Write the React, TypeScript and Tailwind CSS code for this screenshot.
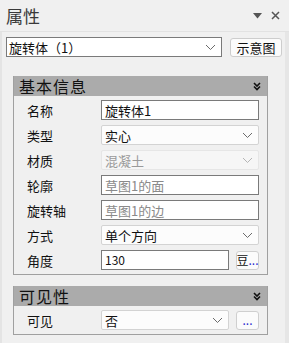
import React from "react";

const font = { fontFamily: '"Noto Sans CJK SC", "Noto Sans", sans-serif' };

function Chevron({ color = "#6b6b6b" }: { color?: string }) {
  return (
    <svg width="11" height="7" viewBox="0 0 11 7" className="shrink-0">
      <path d="M1 1 L5.5 5.5 L10 1" fill="none" stroke={color} strokeWidth="1" />
    </svg>
  );
}

function DoubleChevron() {
  return (
    <svg width="8" height="9" viewBox="0 0 8 9">
      <path d="M1 1 L4 4 L7 1 M1 4.5 L4 7.5 L7 4.5" fill="none" stroke="#111" strokeWidth="1.6" />
    </svg>
  );
}

function TextBox({ value, muted }: { value: string; muted?: boolean }) {
  return (
    <div
      className={`w-[158px] h-[20px] border border-[#7a7a7a] bg-white flex items-center pl-[3px] text-[13px] leading-none ${
        muted ? "text-[#8a8a8a]" : "text-[#111]"
      }`}
    >
      {value}
    </div>
  );
}

function SelectBox({ value, disabled, width = "w-[158px]" }: { value: string; disabled?: boolean; width?: string }) {
  return (
    <div
      className={`${width} h-[20px] border rounded-[2px] flex items-center justify-between pl-[3px] pr-[5px] text-[13px] leading-none ${
        disabled ? "border-[#e6e6e6] bg-[#f6f6f6] text-[#9a9a9a]" : "border-[#d3d3d3] bg-[#fcfcfc] text-[#111]"
      }`}
    >
      <span>{value}</span>
      <Chevron color={disabled ? "#b5b5b5" : "#6b6b6b"} />
    </div>
  );
}

function Row({ label, children }: { label: string; children: React.ReactNode }) {
  return (
    <div className="flex items-center h-[20px]">
      <div className="w-[87px] pl-[13px] text-[13px] text-[#111] leading-none">{label}</div>
      {children}
    </div>
  );
}

function SmallBtn({ children }: { children: React.ReactNode }) {
  return (
    <div className="ml-[7px] w-[23px] h-[19px] border border-[#cfcfcf] rounded-[3px] bg-[#fbfbfb] flex items-center justify-center text-[12px] leading-none text-[#111]">
      {children}
    </div>
  );
}

function Panel({ title, children }: { title: string; children: React.ReactNode }) {
  return (
    <div className="w-[255px] border border-t-0 border-[#a0a0a0]">
      <div className="h-[20px] bg-[#ababab] flex items-center justify-between pl-[5px] pr-[6px]">
        <span className="text-[16px] leading-none text-[#111] tracking-[1px]">{title}</span>
        <DoubleChevron />
      </div>
      <div className="flex flex-col gap-[5px] pt-[4px] pb-[4px]">{children}</div>
    </div>
  );
}

export default function App() {
  return (
    <div className="w-[289px] h-[343px] bg-[#f0f0f0] flex flex-col overflow-hidden" style={font}>
      <div className="h-[32px] flex items-center justify-between pl-[6px] pr-[9px] border-b border-[#e2e2e2] shrink-0">
        <span className="text-[17px] text-[#3a3a3a] leading-none">属性</span>
        <div className="flex items-center gap-[9px] text-[#555]">
          <svg width="9" height="6" viewBox="0 0 9 6">
            <path d="M0 0 L9 0 L4.5 5.5 Z" fill="#555" />
          </svg>
          <svg width="9" height="9" viewBox="0 0 9 9">
            <path d="M1 1 L8 8 M8 1 L1 8" stroke="#555" strokeWidth="1.5" />
          </svg>
        </div>
      </div>
      <div className="flex flex-1">
        <div className="w-[2px] bg-[#e4e4e4] shrink-0" />
        <div className="flex-1 flex flex-col pt-[5px]">
          <div className="flex items-center pl-[4px]">
            <div className="w-[216px] h-[20px] border border-[#7a7a7a] bg-white flex items-center justify-between pl-[2px] pr-[5px] text-[13px] leading-none text-[#111]">
              <span>旋转体（1）</span>
              <Chevron />
            </div>
            <div className="ml-[8px] w-[52px] h-[19px] border border-[#cdcdcd] rounded-[3px] bg-[#fbfbfb] flex items-center justify-center text-[13px] leading-none text-[#111]">
              示意图
            </div>
          </div>
          <div className="pl-[11px] pt-[19px] flex flex-col gap-[11px]">
            <Panel title="基本信息">
              <Row label="名称">
                <TextBox value="旋转体1" />
              </Row>
              <Row label="类型">
                <SelectBox value="实心" />
              </Row>
              <Row label="材质">
                <SelectBox value="混凝土" disabled />
              </Row>
              <Row label="轮廓">
                <TextBox value="草图1的面" muted />
              </Row>
              <Row label="旋转轴">
                <TextBox value="草图1的边" muted />
              </Row>
              <Row label="方式">
                <SelectBox value="单个方向" />
              </Row>
              <Row label="角度">
                <div className="w-[128px] h-[20px] border border-[#7a7a7a] bg-white flex items-center pl-[3px] text-[12px] leading-none text-[#111]">
                  130
                </div>
                <SmallBtn>
                  <span>
                    豆<span className="text-[#2b2bd0]">...</span>
                  </span>
                </SmallBtn>
              </Row>
            </Panel>
            <Panel title="可见性">
              <Row label="可见">
                <SelectBox value="否" width="w-[128px]" />
                <SmallBtn>
                  <span className="text-[#2b2bd0]">...</span>
                </SmallBtn>
              </Row>
            </Panel>
          </div>
        </div>
        <div className="w-[4px] bg-[#e6e6e6] shrink-0" />
      </div>
    </div>
  );
}
